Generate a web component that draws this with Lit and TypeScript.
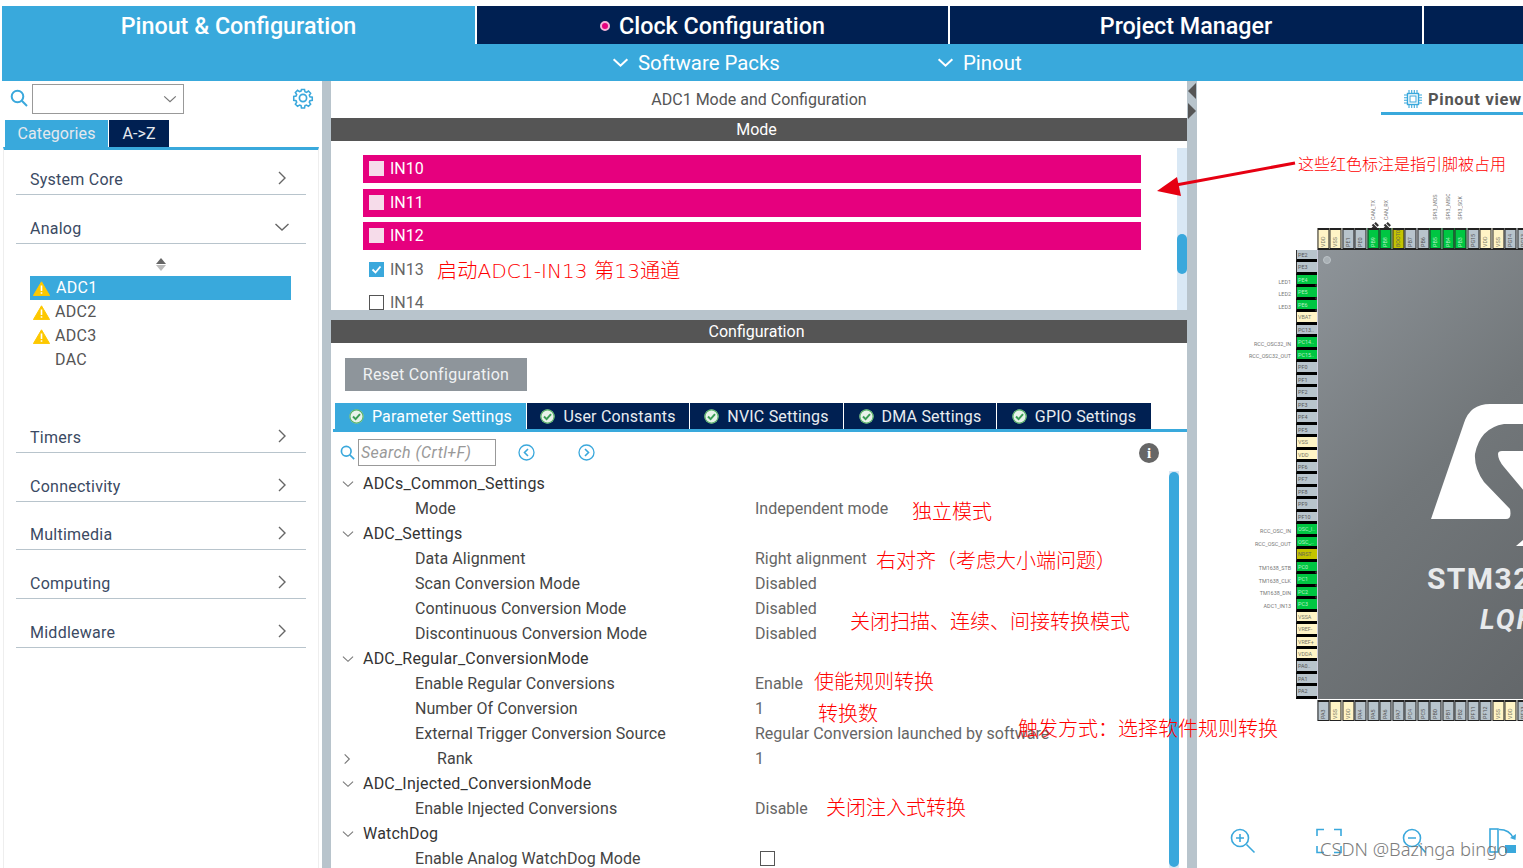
import { LitElement, html, css, svg } from "lit";
import { customElement } from "lit/decorators.js";

const chev = (d: "r" | "d", c = "#666", s = 18) => html`<svg class="chev" width=${s} height=${s} viewBox="0 0 18 18" fill="none" stroke=${c} stroke-width="1.4">
  ${d === "r" ? svg`<path d="M6 3l6 6-6 6"/>` : svg`<path d="M2.5 6l6.5 6 6.5-6"/>`}</svg>`;
const warn = html`<svg class="warn" width="17" height="15" viewBox="0 0 17 15"><path d="M8.5 .8L16.6 14.6H.4z" fill="#fdc800" stroke="#fdc800" stroke-linejoin="round"/><path d="M8.5 4.5v5.6M8.5 11.2v1.6" stroke="#fff" stroke-width="1.6"/></svg>`;
const okc = html`<svg class="ok" width="15" height="15" viewBox="0 0 15 15"><circle cx="7.5" cy="7.5" r="7" fill="#e8f3ea"/><circle cx="7.5" cy="7.5" r="6.6" fill="none" stroke="#58b368" stroke-width="1.2"/><path d="M4 7.5l2.6 2.6L11 5.2" fill="none" stroke="#3a9d55" stroke-width="2"/></svg>`;
const search = (s: number) => html`<svg class="mag" width=${s} height=${s} viewBox="0 0 18 18" fill="none" stroke="#3aa8dc" stroke-width="2"><circle cx="7.5" cy="7.5" r="5.8"/><path d="M11.8 11.8L17 17"/></svg>`;
const gear = html`<svg class="gear" width="22" height="22" viewBox="0 0 22 22" fill="none" stroke="#3aa8dc" stroke-width="1.7"><path d="M9.3 1.5h3.4l.5 2.6 1.7.7 2.2-1.5 2.4 2.4-1.5 2.2.7 1.7 2.6.5v3.4l-2.6.5-.7 1.7 1.5 2.2-2.4 2.4-2.2-1.5-1.7.7-.5 2.6H9.3l-.5-2.6-1.7-.7-2.2 1.5-2.4-2.4 1.5-2.2-.7-1.7-2.6-.5V9.3l2.6-.5.7-1.7-1.5-2.2 2.4-2.4 2.2 1.5 1.7-.7z" transform="translate(1.1 1.1) scale(.9)"/><circle cx="11" cy="11" r="3.6"/></svg>`;
const circ = (left: boolean) => html`<svg width="17" height="17" viewBox="0 0 17 17" fill="none" stroke="#3aa8dc"><circle cx="8.5" cy="8.5" r="7.5" stroke-width="1.3"/><path d=${left ? "M10 5L6.5 8.5 10 12" : "M7 5l3.5 3.5L7 12"} stroke-width="1.6"/></svg>`;
const pushpin = html`<svg class="pp" width="11" height="11" viewBox="0 0 11 11"><path d="M1.5 9.5l3.5-3.5M3.5 3.5L7.5 7.5M6 1.8L9.2 5" stroke="#333" stroke-width="2.2" fill="none"/></svg>`;

const groupsA = ["Timers", "Connectivity", "Multimedia", "Computing", "Middleware"];
const modeRows = [
  { t: "IN10", pink: true }, { t: "IN11", pink: true }, { t: "IN12", pink: true },
  { t: "IN13", on: true }, { t: "IN14" },
];
const cfgTabs = [
  { t: "Parameter Settings", w: 191, on: true }, { t: "User Constants", w: 162 }, { t: "NVIC Settings", w: 153 },
  { t: "DMA Settings", w: 152 }, { t: "GPIO Settings", w: 154 },
];
type Row = { k: string; v?: string; lvl: number; open?: boolean; closed?: boolean; box?: boolean };
const tree: Row[] = [
  { k: "ADCs_Common_Settings", lvl: 0, open: true },
  { k: "Mode", v: "Independent mode", lvl: 1 },
  { k: "ADC_Settings", lvl: 0, open: true },
  { k: "Data Alignment", v: "Right alignment", lvl: 1 },
  { k: "Scan Conversion Mode", v: "Disabled", lvl: 1 },
  { k: "Continuous Conversion Mode", v: "Disabled", lvl: 1 },
  { k: "Discontinuous Conversion Mode", v: "Disabled", lvl: 1 },
  { k: "ADC_Regular_ConversionMode", lvl: 0, open: true },
  { k: "Enable Regular Conversions", v: "Enable", lvl: 1 },
  { k: "Number Of Conversion", v: "1", lvl: 1 },
  { k: "External Trigger Conversion Source", v: "Regular Conversion launched by software", lvl: 1 },
  { k: "Rank", v: "1", lvl: 2, closed: true },
  { k: "ADC_Injected_ConversionMode", lvl: 0, open: true },
  { k: "Enable Injected Conversions", v: "Disable", lvl: 1 },
  { k: "WatchDog", lvl: 0, open: true },
  { k: "Enable Analog WatchDog Mode", lvl: 1, box: true },
];
const notes = [
  { t: "这些红色标注是指引脚被占用", x: 1298, y: 165, s: 16 },
  { t: "启动ADC1-IN13 第13通道", x: 437, y: 271, s: 20.2 },
  { t: "独立模式", x: 912, y: 512, s: 20 },
  { t: "右对齐（考虑大小端问题）", x: 876, y: 561, s: 20 },
  { t: "关闭扫描、连续、间接转换模式", x: 850, y: 622, s: 20 },
  { t: "使能规则转换", x: 814, y: 682, s: 20 },
  { t: "转换数", x: 818, y: 714, s: 20 },
  { t: "触发方式：选择软件规则转换", x: 1018, y: 729, s: 20 },
  { t: "关闭注入式转换", x: 826, y: 808, s: 20 },
];
type Pin = { n: string; c?: string };
const P = (s: string): Pin[] => s.split(" ").map((x) => {
  const [n, c] = x.split(":");
  return { n, c: c === "g" ? "g" : c === "y" ? "y" : c === "o" ? "o" : "" };
});
const leftPins = P("PE2 PE3 PE4:g PE5:g PE6:g VBAT:y PC13.. PC14..:g PC15..:g PF0 PF1 PF2 PF3 PF4 PF5 VSS:y VDD:y PF6 PF7 PF8 PF9 PF10 OSC_I..:g OSC_..:g NRST:o PC0:g PC1:g PC2:g PC3:g VSSA:y VREF-:y VREF+:y VDDA:y PA0.. PA1 PA2");
const leftLabels: Record<number, string> = { 2: "LED1", 3: "LED2", 4: "LED3", 7: "RCC_OSC32_IN", 8: "RCC_OSC32_OUT", 22: "RCC_OSC_IN", 23: "RCC_OSC_OUT", 25: "TM1638_STB", 26: "TM1638_CLK", 27: "TM1638_DIN", 28: "ADC1_IN13" };
const topPins = P("VDD:y VSS:y PE1 PE0 PB9:g PB8:g BOOT0:o PB7 PB6 PB5:g PB4:g PB3:g PG15 VDD:y VSS:y PG14 PG13");
const topLabels: Record<number, string> = { 4: "CAN_TX", 5: "CAN_RX", 9: "SPI3_MOSI", 10: "SPI3_MISO", 11: "SPI3_SCK" };
const botPins = P("PA3 VSS:y VDD:y PA4 PA5 PA6 PA7 PC4 PC5 PB0 PB1 PB2 PF11 PF12 VSS:y VDD:y PF13");

@customElement("app-root")
export class AppRoot extends LitElement {
  static styles = css`
    :host { display: block; position: relative; width: 1523px; height: 868px; overflow: hidden; background: #fff; font-family: Roboto, "Noto Sans", sans-serif; color: #444; }
    svg { display: block; flex: none; }
    .top { padding: 6px 0 0 2px; }
    .tabs { display: flex; gap: 2px; height: 38px; }
    .mt { display: flex; align-items: center; justify-content: center; gap: 9px; background: #002052; color: #fff; font-size: 23.3px; font-weight: 500; padding-top: 2px; box-sizing: border-box; }
    .mt.on { background: #39a9dc; width: 473px; align-items: flex-start; padding-top: 6px; }
    .mt.w1 { width: 471px; } .mt.w2 { width: 472px; } .mt.w3 { flex: 1; }
    .dot { width: 10px; height: 10px; border-radius: 50%; background: #e6007e; border: 2px solid #f3b5d8; box-sizing: border-box; }
    .sub { display: flex; height: 37px; background: #39a9dc; color: #fff; font-size: 20.4px; padding-left: 609px; align-items: center; }
    .sub .chev { stroke-width: 2; }
    .si { display: flex; align-items: center; gap: 8px; width: 325px; }
    .main { display: grid; grid-template-columns: 322px 9px 856px 10px 326px; height: 787px; }
    .split { background: #b8c4cc; position: relative; }
    .tri { position: absolute; left: 1px; width: 0; height: 0; border-top: 8px solid transparent; border-bottom: 8px solid transparent; }
    .tri.l { top: 2px; border-right: 8px solid #555; }
    .tri.r { top: 22px; border-left: 8px solid #555; }

    .left { display: flex; flex-direction: column; padding-left: 3px; box-sizing: border-box; }
    .srow { display: flex; align-items: center; height: 33px; padding: 1px 8px 0 7px; box-sizing: border-box; margin-top: 1px; }
    .srow .mag { margin-top: -2px; }
    .srow .gear { margin-top: -3px; }
    .combo { width: 152px; height: 30px; border: 1px solid #999; box-sizing: border-box; margin-left: 4px; display: flex; align-items: center; justify-content: flex-end; padding-right: 5px; margin-right: auto; }
    .ltabs { display: flex; gap: 1px; padding-left: 2px; margin-top: 5px; height: 27px; }
    .lt { background: #002052; color: #e4e8ee; font-size: 16px; letter-spacing: .1px; display: flex; align-items: center; justify-content: center; width: 60px; }
    .lt.on { background: #39a9dc; width: 103px; }
    .list { flex: 1; border-top: 3px solid #39a9dc; border-left: 1px solid #eee; border-right: 1px solid #eee; width: 316px; box-sizing: border-box; }
    .g { height: 48.85px; margin: 0 12px; border-bottom: 1px solid #b8c4cc; box-sizing: border-box; display: flex; align-items: flex-end; justify-content: space-between; padding: 0 15px 4px 14px; color: #3b4a63; font-size: 16px; letter-spacing: .25px; line-height: 20px; }
    .g.first { height: 45px; }
    .g .chev { margin-bottom: 3px; }
    .sublist { height: 160px; padding: 14px 0 0 26px; box-sizing: border-box; font-size: 16px; color: #555; letter-spacing: .3px; }
    .sort { width: 261px; height: 18px; display: flex; flex-direction: column; align-items: center; gap: 1px; }
    .sort i { width: 0; height: 0; border-left: 5px solid transparent; border-right: 5px solid transparent; }
    .sort .u { border-bottom: 6px solid #666; }
    .sort .d { border-top: 6px solid #bbb; }
    .it { height: 24px; display: flex; align-items: center; width: 261px; padding-left: 3px; gap: 5px; box-sizing: border-box; }
    .it.on { background: #39a9dc; color: #fff; gap: 6px; }
    .it .warn { margin-top: 1px; }
    .it.plain { padding-left: 25px; }

    .center { display: flex; flex-direction: column; min-width: 0; }
    .title { height: 37px; display: flex; align-items: center; justify-content: center; font-size: 16px; color: #555; }
    .bar { height: 23px; background: #555; color: #fff; font-size: 16px; display: flex; align-items: center; justify-content: center; flex: none; padding-right: 5px; box-sizing: border-box; }
    .mode { height: 169px; position: relative; overflow: hidden; padding: 14px 0 0 32px; box-sizing: border-box; flex: none; display: flex; flex-direction: column; gap: 5.5px; }
    .mr { height: 28px; width: 778px; display: flex; align-items: center; flex: none; padding: 0 0 1px 6px; gap: 6px; box-sizing: border-box; font-size: 16px; color: #666; }
    .mr.pink { background: #e6007e; color: #fff; }
    .cb { width: 15px; height: 15px; border: 1px solid #555; box-sizing: border-box; background: #fff; flex: none; display: flex; align-items: center; justify-content: center; }
    .pink .cb { background: #f6dcea; border-color: #f6dcea; }
    .cb.on { background: #3aa8dc; border-color: #3aa8dc; }
    .track { position: absolute; background: #d9e8f5; }
    .thumb { position: absolute; left: 0; right: 0; background: #3aa8dc; border-radius: 5px; }
    .mode .track { right: 0; top: 7px; bottom: 0; width: 10px; }
    .mode .thumb { top: 86px; height: 40px; }
    .hsplit { height: 10px; background: #b8c4cc; flex: none; }
    .cfg { flex: 1; position: relative; min-height: 0; display: flex; flex-direction: column; }
    .reset { margin: 15px 0 0 14px; width: 182px; height: 33px; background: #8e959b; color: #f0f2f3; font-size: 16px; letter-spacing: .3px; display: flex; align-items: center; justify-content: center; }
    .ctabs { display: flex; gap: 1px; margin: 12px 0 0 2px; padding-left: 2px; border-bottom: 3px solid #39a9dc; height: 26px; width: 852px; box-sizing: content-box; }
    .ct { background: #002052; color: #e8ecf0; font-size: 16px; letter-spacing: .2px; display: flex; align-items: center; justify-content: center; gap: 8px; box-sizing: border-box; flex: none; }
    .ct.on { background: #39a9dc; color: #fff; }
    .fr { display: flex; align-items: center; height: 39px; padding: 2px 28px 0 9px; box-sizing: border-box; flex: none; }
    .finput { width: 138px; height: 27px; border: 1px solid #999; box-sizing: border-box; margin-left: 3px; font-style: italic; color: #999; font-size: 16px; letter-spacing: .4px; line-height: 26px; padding-left: 2px; }
    .nav { margin-left: 22px; } .nav2 { margin-left: 43px; }
    .info { margin-left: auto; width: 20px; height: 20px; border-radius: 50%; background: #666; color: #fff; font: bold 15px/20px "Liberation Serif", serif; text-align: center; }
    .tr { display: grid; grid-template-columns: 424px 1fr; height: 25px; align-items: center; font-size: 16px; flex: none; white-space: nowrap; }
    .k { display: flex; align-items: center; color: #444; padding-left: 10px; letter-spacing: .05px; }
    .k .arrow { width: 22px; flex: none; }
    .k.l0 { color: #333; letter-spacing: .2px; } .k.l1 { padding-left: 84px; } .k.l2 { padding-left: 9px; }
    .k.l2 .lab { margin-left: 97px; }
    .k.l2 .arrow { width: 0; }
    .val { color: #666; display: block; }
    .cfg > .track { right: 8px; top: 128px; bottom: 0; width: 10px; border-radius: 0 0 5px 5px; }
    .cfg > .track .thumb { top: 1px; bottom: 4px; }
    .tb { width: 15px; height: 15px; margin: 0 0 0 5px; border: 1px solid #555; box-sizing: border-box; }

    .right { position: relative; display: flex; flex-direction: column; }
    .pv { display: flex; justify-content: flex-end; height: 34px; flex: none; }
    .pvt { width: 142px; height: 34px; border-bottom: 3px solid #39a9dc; box-sizing: border-box; display: flex; align-items: center; padding: 5px 0 0 23px; gap: 6px; font-weight: 700; font-size: 16.5px; letter-spacing: .7px; color: #555; white-space: nowrap; overflow: hidden; }
    .sp { flex: 1; }
    .tools { display: flex; height: 40px; padding-left: 33px; flex: none; box-sizing: border-box; align-items: flex-start; }
    .tools svg { margin-right: 60px; }
    .tools svg:last-child { margin: 0 0 0 3px; }
    .endline { height: 3px; background: #39a9dc; flex: none; border-radius: 3px 0 0 0; }

    .chip { position: absolute; left: 33px; top: 113px; width: 293px; height: 534px; overflow: hidden; display: grid; grid-template-columns: 87px 1fr; grid-template-rows: 55px 450px 29px; font-size: 5.4px; color: #555; }
    .toprow { grid-column: 2; grid-row: 1; display: flex; align-items: flex-end; }
    .tcol { width: 12.47px; flex: none; display: flex; flex-direction: column; align-items: center; position: relative; }
    .tlab { writing-mode: vertical-rl; transform: rotate(180deg); margin-bottom: 8px; text-align: left; color: #777; line-height: 6px; white-space: nowrap; }
    .tcol .pp { position: absolute; left: 2px; bottom: 17px; }
    .vp { width: 12.47px; height: 21px; box-sizing: border-box; border: 1px solid #222; border-bottom-width: 2px; background: #b8c4cc; writing-mode: vertical-rl; transform: rotate(180deg); line-height: 10px; overflow: hidden; text-align: left; white-space: nowrap; flex: none; padding-top: 1px; }
    .leftcol { grid-column: 1; grid-row: 2; display: flex; flex-direction: column; padding-top: 1px; }
    .lrow { height: 12.47px; display: flex; align-items: center; flex: none; position: relative; }
    .llab { width: 66px; padding: 1px 5px 0 0; box-sizing: border-box; text-align: right; color: #777; white-space: nowrap; line-height: 8px; }
    .hp { width: 21px; height: 12.47px; box-sizing: border-box; background: #b8c4cc; border-left: 1px solid #333; border-bottom: 3px solid #000; line-height: 10px; overflow: hidden; white-space: nowrap; padding-left: 1px; }
    .lrow .pp { position: absolute; left: 82px; bottom: -5px; }
    .y { background: #fff4c6; color: #776; } .g2 { background: #00c642; color: #b7eec8; } .o { background: #c4c400; color: #665; }
    .body { grid-column: 2; grid-row: 2; position: relative; background: linear-gradient(135deg, #8e9499 0%, #72777a 50%, #63676a 100%); border-top: 1px solid #222; border-left: 1px solid #ccd; overflow: hidden; color: #e8eaec; font-weight: 700; white-space: nowrap; }
    .dotc { position: absolute; left: 5px; top: 6px; width: 6px; height: 6px; border-radius: 50%; background: #a9b0b5; border: 1px solid #bcc3c7; }
    .logo { position: absolute; left: 0; top: 0; }
    .stm { position: absolute; left: 109px; top: 311px; font-size: 30px; letter-spacing: 1.4px; line-height: 36px; }
    .lq { position: absolute; left: 162px; top: 352px; font-size: 28px; letter-spacing: 2px; font-style: italic; line-height: 36px; }
    .botrow { grid-column: 2; grid-row: 3; display: flex; padding-top: 1px; }

    .note { position: absolute; color: #f00; font-family: "DejaVu Sans", "Noto Sans CJK SC", sans-serif; font-weight: 300; white-space: nowrap; line-height: 1; transform: translateY(-50%); }
    .over { position: absolute; left: 0; top: 0; pointer-events: none; }
    .wm { position: absolute; left: 1320px; top: 838px; font-size: 18.4px; line-height: 22px; color: #6e6e6e; white-space: nowrap; font-family: "Noto Sans", sans-serif; font-weight: 300; opacity: .9; }
  `;

  private pinCls(c?: string) { return c === "g" ? "g2" : c || ""; }

  render() {
    return html`
      <div class="top">
        <div class="tabs">
          <div class="mt on">Pinout &amp; Configuration</div>
          <div class="mt w1"><span class="dot"></span>Clock Configuration</div>
          <div class="mt w2">Project Manager</div>
          <div class="mt w3"></div>
        </div>
        <div class="sub">
          <div class="si">${chev("d", "#fff", 19)}Software Packs</div>
          <div class="si">${chev("d", "#fff", 19)}Pinout</div>
        </div>
      </div>
      <div class="main">
        <div class="left">
          <div class="srow">${search(18)}
            <div class="combo">${chev("d", "#777", 16)}</div>
            ${gear}
          </div>
          <div class="ltabs"><div class="lt on">Categories</div><div class="lt">A-&gt;Z</div></div>
          <div class="list">
            <div class="g first">System Core${chev("r")}</div>
            <div class="g">Analog${chev("d")}</div>
            <div class="sublist">
              <div class="sort"><i class="u"></i><i class="d"></i></div>
              <div class="it on">${warn}<span>ADC1</span></div>
              <div class="it">${warn}<span>ADC2</span></div>
              <div class="it">${warn}<span>ADC3</span></div>
              <div class="it plain">DAC</div>
            </div>
            ${groupsA.map((g) => html`<div class="g">${g}${chev("r")}</div>`)}
          </div>
        </div>
        <div class="split"></div>
        <div class="center">
          <div class="title">ADC1 Mode and Configuration</div>
          <div class="bar">Mode</div>
          <div class="mode">
            ${modeRows.map((r) => html`<div class="mr ${r.pink ? "pink" : ""}">
              <span class="cb ${r.on ? "on" : ""}">${r.on ? html`<svg width="13" height="13" viewBox="0 0 13 13" fill="none" stroke="#fff" stroke-width="1.8"><path d="M2.5 6.5l3 3 5-6"/></svg>` : ""}</span>${r.t}</div>`)}
            <div class="track"><div class="thumb"></div></div>
          </div>
          <div class="hsplit"></div>
          <div class="bar">Configuration</div>
          <div class="cfg">
            <div class="reset">Reset Configuration</div>
            <div class="ctabs">
              ${cfgTabs.map((t) => html`<div class="ct ${t.on ? "on" : ""}" style="width:${t.w}px">${okc}${t.t}</div>`)}
            </div>
            <div class="fr">${search(15)}<div class="finput">Search (Crtl+F)</div>
              <span class="nav">${circ(true)}</span><span class="nav2">${circ(false)}</span>
              <div class="info">i</div>
            </div>
            ${tree.map((r) => html`<div class="tr">
              <div class="k l${r.lvl}">
                ${r.lvl === 0 ? html`<span class="arrow">${chev("d", "#777", 14)}</span>` : ""}
                ${r.closed ? html`<span class="arrow">${chev("r", "#777", 14)}</span>` : ""}
                <span class="lab">${r.k}</span>
              </div>
              ${r.box ? html`<div class="tb"></div>` : html`<span class="val">${r.v ?? ""}</span>`}
            </div>`)}
            <div class="track"><div class="thumb"></div></div>
          </div>
        </div>
        <div class="split"><i class="tri l"></i><i class="tri r"></i></div>
        <div class="right">
          <div class="pv"><div class="pvt">
            <svg width="18" height="18" viewBox="0 0 18 18" fill="none" stroke="#3aa8dc"><rect x="3.5" y="3.5" width="11" height="11" stroke-width="1.4"/><rect x="6" y="6" width="6" height="6" stroke-width="1"/><path d="M5 0v3.5M7.7 0v3.5M10.3 0v3.5M13 0v3.5M5 14.5V18M7.7 14.5V18M10.3 14.5V18M13 14.5V18M0 5h3.5M0 7.7h3.5M0 10.3h3.5M0 13h3.5M14.5 5H18M14.5 7.7H18M14.5 10.3H18M14.5 13H18" stroke-width="1.1"/></svg>
            Pinout view</div></div>
          <div class="chip">
            <div class="toprow">
              ${topPins.map((p, i) => html`<div class="tcol">
                ${topLabels[i] ? html`<span class="tlab">${topLabels[i]}</span>` : ""}
                ${i === 4 || i === 5 ? pushpin : ""}
                <div class="vp ${this.pinCls(p.c)}">${p.n}</div>
              </div>`)}
            </div>
            <div class="leftcol">
              ${leftPins.map((p, i) => html`<div class="lrow">
                <span class="llab">${leftLabels[i] ?? ""}</span>
                <div class="hp ${this.pinCls(p.c)}">${p.n}</div>
                ${[2, 3, 4, 25, 26, 27].includes(i) ? pushpin : ""}
              </div>`)}
            </div>
            <div class="body">
              <span class="dotc"></span>
              <svg class="logo" width="206" height="310" viewBox="0 0 206 310">
                <path d="M113 269L146 173Q152 154 172 154H206V174H186Q162 178 157 204Q156 218 166 232L192 259Q194 269 188 269Z" fill="#fff"/>
                <path d="M180 204Q180 210 186 217L206 241V201H184Q180 201 180 204Z" fill="#fff"/>
                <path d="M198 296L206 289V296Z" fill="#fff"/>
              </svg>
              <span class="stm">STM32F</span>
              <span class="lq">LQFP</span>
            </div>
            <div class="botrow">
              ${botPins.map((p) => html`<div class="vp ${this.pinCls(p.c)}">${p.n}</div>`)}
            </div>
          </div>
          <div class="sp"></div>
          <div class="tools">
            <svg width="26" height="26" viewBox="0 0 26 26" fill="none" stroke="#3aa8dc" stroke-width="1.6"><circle cx="10" cy="10" r="8.5"/><path d="M16.5 16.5l8 8M10 6v8M6 10h8"/></svg>
            <svg width="26" height="26" viewBox="0 0 26 26" fill="none" stroke="#3aa8dc" stroke-width="1.6"><path d="M1 8V1.5h7M18 1.5h7V8M25 18v6.5h-7M8 24.5H1V18"/></svg>
            <svg width="24" height="26" viewBox="0 0 24 26" fill="none" stroke="#3aa8dc" stroke-width="1.6"><circle cx="10" cy="10" r="8.5"/><path d="M16.5 16.5l7 8M6 10h8"/></svg>
            <svg width="27" height="26" viewBox="0 0 27 26" fill="none" stroke="#3aa8dc" stroke-width="1.6"><rect x="1" y="1" width="8" height="23"/><path d="M10 1.5c7 0 12 3 14.5 9"/><path d="M21 10l5.5 2 .5-6z" fill="#3aa8dc" stroke="none"/><rect x="16" y="17" width="11" height="8" fill="#3aa8dc" stroke="none"/></svg>
          </div>
          <div class="endline"></div>
        </div>
      </div>

      <svg class="over" width="1523" height="868" fill="#e60012">
        <path d="M1295 163L1176 185" stroke="#e60012" stroke-width="3" fill="none"/>
        <path d="M1157 191L1177 177L1181 196Z"/>
      </svg>
      ${notes.map((n) => html`<div class="note" style="left:${n.x}px;top:${n.y}px;font-size:${n.s}px">${n.t}</div>`)}
      <div class="wm">CSDN @Bazinga bingo</div>
    `;
  }
}
